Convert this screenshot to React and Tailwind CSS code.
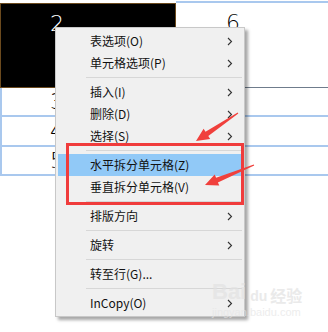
import React from 'react';

const Chevron = () => (
  <svg width="6" height="9" viewBox="0 0 6 9" className="shrink-0">
    <path d="M1 1 L4.5 4.5 L1 8" fill="none" stroke="#333" strokeWidth="1.1" />
  </svg>
);

const menu = [
  { label: '表选项(O)', sub: true },
  { label: '单元格选项(P)', sub: true },
  { sep: true },
  { label: '插入(I)', sub: true },
  { label: '删除(D)', sub: true },
  { label: '选择(S)', sub: true },
  { sep: true },
  { label: '水平拆分单元格(Z)', active: true },
  { label: '垂直拆分单元格(V)' },
  { sep: true },
  { label: '排版方向', sub: true },
  { sep: true },
  { label: '旋转', sub: true },
  { sep: true },
  { label: '转至行(G)...' },
  { sep: true },
  { label: 'InCopy(O)', sub: true },
];

const digit = "font-['DejaVu_Sans'] font-extralight text-[22px] leading-none";

export default function App() {
  return (
    <div className="relative w-[328px] h-[332px] bg-white overflow-hidden font-['Noto_Sans_CJK_SC','Noto_Sans',sans-serif]">
      {/* table */}
      <div className="flex flex-col pt-[1px]">
        <div className="flex h-[87px]">
          <div className="w-[176px] mt-[2px] bg-black border border-[#6b4a1e] pl-[49px] pt-[8px]">
            <span className={`${digit} text-white`}>2</span>
          </div>
          <div className="flex-1 border-t-2 border-[#a9c8ee] border-b border-b-[#6f7c8c] pl-[50px] pt-[8px]">
            <span className={`${digit} text-black`}>6</span>
          </div>
        </div>
        {['3', '4', '5'].map((n, i) => (
          <div
            key={n}
            className={`flex items-center border-l-2 border-b-2 border-[#a9c8ee] pl-[48px] ${i === 1 ? 'h-[30px]' : 'h-[29px]'}`}
          >
            <span className={`${digit} text-black`}>{n}</span>
          </div>
        ))}
      </div>

      {/* context menu */}
      <div className="absolute left-[55px] top-[27px] w-[190px] py-[2px] bg-[#f0f0f0] border border-[#c8c8c8] shadow-[3px_3px_3px_rgba(0,0,0,0.35)]">
        {menu.map((m, i) =>
          m.sep ? (
            <div key={i} className="h-[7px] flex items-center pl-[30px] pr-[2px]">
              <div className="h-px w-full bg-[#d7d7d7]" />
            </div>
          ) : (
            <div
              key={i}
              className={`h-[22px] mx-[2px] flex items-center justify-between pl-[32px] pr-[9px] text-[12px] text-[#111] ${m.active ? 'bg-[#91c9f7]' : ''}`}
            >
              <span>{m.label}</span>
              {m.sub && <Chevron />}
            </div>
          )
        )}
      </div>

      {/* red highlight box */}
      <div className="absolute left-[66px] top-[143px] w-[178px] h-[62px] border-[3px] border-[#f03c3c]" />

      {/* arrows */}
      <svg className="absolute left-0 top-0 pointer-events-none" width="328" height="332">
        <polygon
          fill="#f0403c"
          points="238.3,113.4 208.3,136 210.2,138.9 196,141 203.6,128.8 205.5,131.7 237.7,112.6"
        />
        <polygon
          fill="#f0403c"
          points="254.2,165.5 217.9,182.4 219.3,185.6 205,185 214.7,174.5 216.1,177.8 253.8,164.5"
        />
      </svg>

      {/* watermark */}
      <div className="absolute left-[212px] top-[281px] flex flex-col items-start pointer-events-none opacity-70">
        <div className="flex items-end leading-none">
          <span className="font-['Liberation_Sans'] font-bold text-[22px] text-[#e2e2e2]">Bai</span>
          <span className="ml-[4px] font-['Liberation_Sans'] font-bold text-[14px] text-[#e2e2e2]">du</span>
          <span className="ml-[3px] text-[16px] font-bold text-[#e2e2e2]">经验</span>
        </div>
        <span className="mt-[4px] font-['Liberation_Sans'] text-[11px] leading-none text-[#e6e6e6]">jingyan.baidu.com</span>
      </div>
    </div>
  );
}
